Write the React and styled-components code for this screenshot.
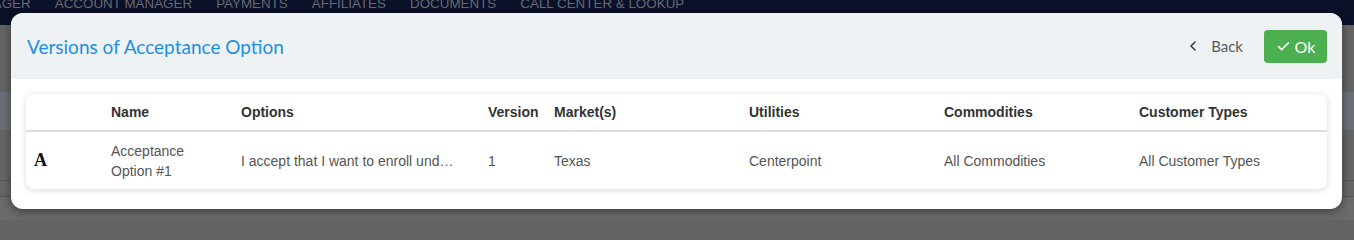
import React from "react";
import styled, { createGlobalStyle } from "styled-components";
import { Check, ChevronLeft } from "lucide-react";

const Global = createGlobalStyle`
  html, body { margin: 0; padding: 0; }
  body { background: #636363; font-family: "Liberation Sans", Arial, sans-serif; }
`;

const Page = styled.div`
  position: relative;
  width: 1354px;
  height: 220px;
  overflow: hidden;
  background: #636363;
  display: flex;
  flex-direction: column;
`;

const NavBar = styled.div`
  height: 25px;
  flex: none;
  background: #0b1128;
  display: flex;
  gap: 24px;
  overflow: hidden;
`;

const NavItem = styled.span`
  font-family: "Liberation Sans", Arial, sans-serif;
  font-size: 13.4px;
  line-height: 14px;
  margin-top: -3px;
  color: #666a76;
  text-transform: uppercase;
  white-space: nowrap;
  margin-left: ${(p) => p.$shift || "0px"};
`;

const Backdrop = styled.div`
  flex: 1;
  display: flex;
  flex-direction: column;
`;

const Band = styled.div`
  height: ${(p) => p.$h}px;
  background: ${(p) => p.$bg};
  flex: none;
`;

const Modal = styled.div`
  position: absolute;
  left: 11px;
  top: 13px;
  width: 1331px;
  height: 196px;
  border-radius: 12px;
  background: #ffffff;
  overflow: hidden;
  box-shadow: 0 2px 10px rgba(0, 0, 0, 0.45);
  display: flex;
  flex-direction: column;
`;

const Header = styled.div`
  height: 66px;
  flex: none;
  background: #eef2f5;
  display: flex;
  align-items: center;
  justify-content: space-between;
  padding: 0 15px 0 16px;
`;

const Title = styled.h2`
  margin: 0;
  font-family: Lato, "Open Sans", sans-serif;
  font-weight: 400;
  font-size: 19px;
  color: #1d8fe1;
`;

const Actions = styled.div`
  display: flex;
  align-items: center;
  gap: 21px;
`;

const BackButton = styled.button`
  border: none;
  background: transparent;
  padding: 0;
  display: flex;
  align-items: center;
  gap: 10px;
  font-family: Lato, "Open Sans", sans-serif;
  font-size: 15px;
  color: #5a5a5a;
  cursor: pointer;
`;

const OkButton = styled.button`
  border: none;
  background: #4caf50;
  color: #ffffff;
  width: 63px;
  height: 33px;
  border-radius: 4px;
  display: flex;
  align-items: center;
  justify-content: center;
  gap: 4px;
  font-family: Lato, "Open Sans", sans-serif;
  font-size: 16px;
  font-weight: 400;
  cursor: pointer;
`;

const Body = styled.div`
  padding: 15px 15px 20px;
  flex: 1;
`;

const Card = styled.div`
  border-radius: 8px;
  background: #fff;
  box-shadow: 0 1px 6px rgba(0, 0, 0, 0.16);
  overflow: hidden;
`;

const cols = "77px 130px 247px 66px 195px 195px 195px 1fr";

const HeadRow = styled.div`
  display: grid;
  grid-template-columns: ${cols};
  height: 36px;
  align-items: center;
  border-bottom: 2px solid #dedede;
`;

const Row = styled.div`
  display: grid;
  grid-template-columns: ${cols};
  height: 57px;
  align-items: center;
`;

const Th = styled.div`
  padding: 0 8px;
  font-size: 14px;
  font-weight: 700;
  color: #333;
  white-space: nowrap;
`;

const Td = styled.div`
  padding: 0 ${(p) => p.$padRight || 8}px 0 8px;
  font-size: 14px;
  line-height: 20px;
  color: #555;
  min-width: 0;
  ${(p) =>
    p.$ellipsis &&
    `
    white-space: nowrap;
    overflow: hidden;
    text-overflow: ellipsis;
  `}
`;

const TypeIcon = styled.span`
  font-family: "Liberation Serif", "Times New Roman", serif;
  font-weight: 700;
  font-size: 18px;
  color: #111;
`;

const columns = ["", "Name", "Options", "Version", "Market(s)", "Utilities", "Commodities", "Customer Types"];

export default function App() {
  return (
    <>
      <Global />
      <Page>
        <NavBar>
          <NavItem $shift="-37px">Manager</NavItem>
          <NavItem>Account Manager</NavItem>
          <NavItem>Payments</NavItem>
          <NavItem>Affiliates</NavItem>
          <NavItem>Documents</NavItem>
          <NavItem>Call Center &amp; Lookup</NavItem>
        </NavBar>
        <Backdrop>
          <Band $h={67} $bg="#646464" />
          <Band $h={38} $bg="#6b7077" />
          <Band $h={50} $bg="#656565" />
          <Band $h={1} $bg="#555555" />
          <Band $h={15} $bg="#666666" />
          <Band $h={1} $bg="#585858" />
          <Band $h={30} $bg="#6a6a6a" />
        </Backdrop>
        <Modal>
          <Header>
            <Title>Versions of Acceptance Option</Title>
            <Actions>
              <BackButton>
                <ChevronLeft size={16} strokeWidth={2.2} color="#333" />
                Back
              </BackButton>
              <OkButton>
                <Check size={15} strokeWidth={2.4} />
                Ok
              </OkButton>
            </Actions>
          </Header>
          <Body>
            <Card>
              <HeadRow>
                {columns.map((c, i) => (
                  <Th key={i}>{c}</Th>
                ))}
              </HeadRow>
              <Row>
                <Td>
                  <TypeIcon>A</TypeIcon>
                </Td>
                <Td $padRight={20}>Acceptance Option #1</Td>
                <Td $ellipsis $padRight={22}>
                  I accept that I want to enroll under the terms and conditions
                </Td>
                <Td>1</Td>
                <Td>Texas</Td>
                <Td>Centerpoint</Td>
                <Td>All Commodities</Td>
                <Td>All Customer Types</Td>
              </Row>
            </Card>
          </Body>
        </Modal>
      </Page>
    </>
  );
}
